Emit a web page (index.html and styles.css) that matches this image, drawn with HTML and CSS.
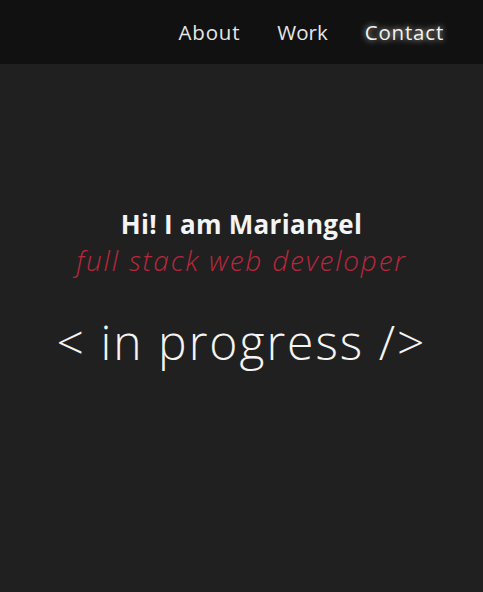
FILE: index.html
```html
<!DOCTYPE html>
<html lang="en">
<head>
<meta charset="utf-8">
<title>Mariangel</title>
<link rel="stylesheet" href="styles.css">
</head>
<body>
<header class="topbar">
  <nav class="nav">
    <a class="nav-link" href="#about">About</a>
    <a class="nav-link nav-link--work" href="#work">Work</a>
    <a class="nav-link nav-link--active" href="#contact">Contact</a>
  </nav>
</header>
<main class="hero">
  <h1 class="hero-title">Hi! I am Mariangel</h1>
  <p class="hero-subtitle">full stack web developer</p>
  <p class="hero-status">&lt; in progress /&gt;</p>
</main>
</body>
</html>
```
FILE: styles.css
```css
html, body {
  margin: 0;
  padding: 0;
  height: 100%;
}
body {
  background: #212020;
  font-family: "Open Sans", "Lato", sans-serif;
  color: #eeeeee;
}
.topbar {
  height: 64px;
  background: #111111;
  display: flex;
  align-items: center;
  justify-content: flex-end;
  padding-right: 39px;
}
.nav {
  display: flex;
  gap: 37px;
}
.nav-link {
  color: #e6e6e6;
  text-decoration: none;
  font-size: 20.5px;
  font-weight: 500;
  letter-spacing: 0.8px;
}
.nav-link--work {
  letter-spacing: 0;
}
.nav-link--active {
  color: #f2f2f2;
  text-shadow: 0 0 6px rgba(255,255,255,0.8);
}
.hero {
  display: flex;
  flex-direction: column;
  align-items: center;
  padding-top: 142px;
}
.hero-title {
  margin: 0;
  font-size: 26px;
  font-weight: 700;
  color: #f4f4f4;
  line-height: 36px;
  letter-spacing: 0.3px;
}
.hero-subtitle {
  margin: 0;
  font-size: 28px;
  font-weight: 300;
  font-style: italic;
  color: #b8283d;
  line-height: 36px;
  letter-spacing: 1.8px;
}
.hero-status {
  margin: 34px 0 0;
  font-size: 48px;
  font-weight: 300;
  color: #f4f4f4;
  line-height: 60px;
  letter-spacing: 2px;
}
```
